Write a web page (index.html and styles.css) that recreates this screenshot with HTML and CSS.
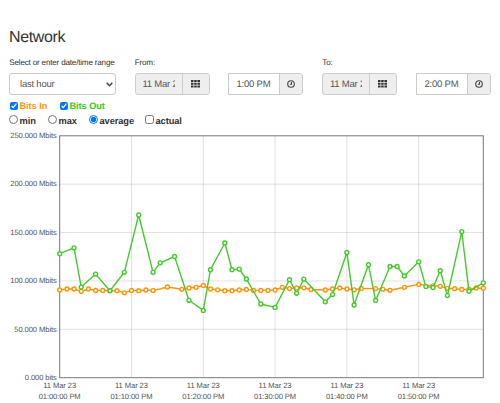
FILE: index.html
```html
<!DOCTYPE html>
<html lang="en">
<head>
<meta charset="utf-8">
<title>Network</title>
<link rel="stylesheet" href="styles.css">
</head>
<body>
<main class="page">
  <h1 class="title">Network</h1>
  <div class="filters">
    <div class="field field-range">
      <label class="label">Select or enter date/time range</label>
      <div class="control select"><span>last hour</span>
        <svg class="chevron" width="7" height="5" viewBox="0 0 7 5"><path d="M.7.8 3.5 3.7 6.3.8"/></svg>
      </div>
    </div>
    <div class="field field-from">
      <label class="label">From:</label>
      <div class="pair">
        <div class="control group date"><span class="value">11 Mar 2023</span><span class="addon"><svg width="9" height="8" viewBox="0 0 9 8"><path d="M0 0h2.5v2H0zM3.2 0h2.5v2H3.2zM6.4 0H9v2H6.4zM0 2.7h2.5v2H0zM3.2 2.7h2.5v2H3.2zM6.4 2.7H9v2H6.4zM0 5.4h2.5v2H0zM3.2 5.4h2.5v2H3.2zM6.4 5.4H9v2H6.4z"/></svg></span></div>
        <div class="control group time"><span class="value">1:00 PM</span><span class="addon"><svg class="clock" width="8" height="8" viewBox="0 0 8 8"><circle cx="4" cy="4" r="3.3"/><path d="M4.5 2v2.3H2.8"/></svg></span></div>
      </div>
    </div>
    <div class="field">
      <label class="label">To:</label>
      <div class="pair">
        <div class="control group date date-to"><span class="value">11 Mar 2023</span><span class="addon"><svg width="9" height="8" viewBox="0 0 9 8"><path d="M0 0h2.5v2H0zM3.2 0h2.5v2H3.2zM6.4 0H9v2H6.4zM0 2.7h2.5v2H0zM3.2 2.7h2.5v2H3.2zM6.4 2.7H9v2H6.4zM0 5.4h2.5v2H0zM3.2 5.4h2.5v2H3.2zM6.4 5.4H9v2H6.4z"/></svg></span></div>
        <div class="control group time time-to"><span class="value">2:00 PM</span><span class="addon"><svg class="clock" width="8" height="8" viewBox="0 0 8 8"><circle cx="4" cy="4" r="3.3"/><path d="M4.5 2v2.3H2.8"/></svg></span></div>
      </div>
    </div>
  </div>
  <div class="options series">
    <label class="option in"><input type="checkbox" checked>Bits In</label>
    <label class="option out"><input type="checkbox" checked>Bits Out</label>
  </div>
  <div class="options modes">
    <label class="option min"><input type="radio" name="mode">min</label>
    <label class="option max"><input type="radio" name="mode">max</label>
    <label class="option average"><input type="radio" name="mode" checked>average</label>
    <label class="option"><input type="checkbox">actual</label>
  </div>
  <svg class="chart" width="500" height="273" viewBox="0 130 500 273">
    <g id="grid" class="grid"></g>
    <rect class="frame" x="59.7" y="135.8" width="423.6" height="241.9"/>
    <g id="labels"></g>
    <g id="plot"></g>
  </svg>
</main>
<script src="chart.js"></script>
</body>
</html>
```
FILE: styles.css
```css
* { box-sizing: border-box; }
html, body { margin: 0; }
body {
  width: 500px;
  height: 403px;
  overflow: hidden;
  background: #fff;
  color: #333;
  font-family: "Liberation Sans", Arial, sans-serif;
  text-rendering: geometricPrecision;
}
.title {
  margin: 0;
  padding: 27px 0 0 9px;
  height: 57px;
  font-size: 16px;
  letter-spacing: -.35px;
  line-height: 21px;
  font-weight: 400;
}
.filters {
  display: flex;
  height: 43px;
  padding-left: 9px;
}
.field-range { width: 125.5px; }
.field-from { width: 187.5px; }
.label {
  display: block;
  height: 16px;
  padding-left: .3px;
  font-size: 8.1px;
  letter-spacing: -.19px;
  line-height: 11px;
  white-space: nowrap;
}
.control {
  display: flex;
  height: 22px;
  border: 1px solid #ccc;
  border-radius: 3px;
  background: #fff;
  color: #555;
  font-size: 9.5px;
  letter-spacing: -.22px;
  line-height: 21px;
  white-space: nowrap;
}
.select {
  width: 107px;
  padding: 0 2px 0 10px;
  align-items: center;
  justify-content: space-between;
}
.chevron {
  fill: none;
  stroke: #444;
  stroke-width: 1.5;
}
.pair {
  display: flex;
  gap: 18.5px;
}
.date { width: 75px; background: #eee; }
.value {
  flex: none;
  width: 47px;
  padding-left: 7.5px;
}
.date .value {
  width: 32.3px;
  margin-left: 7px;
  padding-left: 0;
  overflow: hidden;
}
.date .addon { margin-left: 7px; }
.date-to .value { width: 31.5px; }
.time { width: 75px; border-radius: 0 3px 3px 0; }
.time .value { width: 50px; }
.time-to .value { width: 50.5px; padding-left: 8px; }
.addon {
  display: flex;
  flex: 1;
  align-items: center;
  justify-content: center;
  border-left: 1px solid #ccc;
  background: #eee;
  border-radius: 0 2px 2px 0;
  fill: #333;
}
.date .addon svg { margin-top: -1px; }
.clock {
  fill: none;
  stroke: #444;
  stroke-width: 1.1;
}
.options {
  display: flex;
  padding-left: 9px;
  font-size: 9.3px;
  letter-spacing: -.1px;
  font-weight: 700;
}
.series { height: 14px; }
.modes { height: 16px; }
.option {
  display: flex;
  height: 13px;
  line-height: 13px;
}
.option input {
  width: 9px;
  height: 9px;
  margin: 2px 1.5px 0 0;
}
.series input {
  width: 8px;
  height: 8px;
  margin-left: 1px;
}
.modes input { margin-top: 1px; }
.modes .option { line-height: 14px; }
.in { width: 50px; color: #ff9408; }
.out { color: #3c2; }
.min { width: 39px; }
.max { width: 41px; }
.average { width: 56px; }
.chart { display: block; }
.grid { stroke: #000; stroke-opacity: .15; stroke-width: .8; }
.frame { fill: none; stroke: #777; stroke-width: 1; }
.axis { font-size: 7.6px; fill: #545454; }
.line { fill: none; stroke-width: 1.4; stroke-linejoin: round; }
.dot { fill: #fff; stroke-width: 1.4; }
.orange { stroke: #ff9408; }
.green { stroke: #43cb2b; }
```
FILE: chart.js
```js
const NS = "http://www.w3.org/2000/svg";
const left = 59.7, step = 7.18;

function add(parent, name, attrs, text) {
  const el = document.createElementNS(NS, name);
  for (const key in attrs) el.setAttribute(key, attrs[key]);
  if (text) el.textContent = text;
  parent.appendChild(el);
}

const grid = document.getElementById("grid");
const labels = document.getElementById("labels");
const plot = document.getElementById("plot");

["250.000 Mbits", "200.000 Mbits", "150.000 Mbits", "100.000 Mbits", "50.000 Mbits", "0.000 bits"].forEach((text, i) => {
  const y = 135.8 + i * 48.38;
  if (i > 0 && i < 5) add(grid, "line", { x1: left, x2: 483.3, y1: y, y2: y });
  add(labels, "text", { class: "axis", x: 56.8, y: y + 2.3, "text-anchor": "end",
    textLength: [46.5, 46.5, 46.5, 46.5, 42.5, 32][i] }, text);
});

for (let i = 0; i < 6; i++) {
  const x = left + i * 71.8;
  if (i) add(grid, "line", { x1: x, x2: x, y1: 135.8, y2: 377.7 });
  add(labels, "text", { class: "axis", x: x, y: 388.3, "text-anchor": "middle", textLength: 33 }, "11 Mar 23");
  add(labels, "text", { class: "axis", x: x, y: 399, "text-anchor": "middle", textLength: 42 }, `01:${i}0:00 PM`);
}

const bitsIn = [[0,290],[1,289],[2,289],[3,291.3],[4,289],[5,290.5],[6,290.5],[7,290.7],[8,290.7],[9,292.8],[10,290.4],[11,290.7],[12,290],[13,290.6],[15,287],[17,289.3],[18,288],[19,287.3],[20,285.5],[21,289],[22,289.8],[23,290.7],[24,290.7],[25,290],[26,289.4],[27,290.4],[28,290.4],[29,290.4],[30,290],[31,287.3],[32,288.6],[33,288],[34,287.8],[35,289.5],[37,290],[38,289],[39,288],[40,289],[41,289.8],[42,288.5],[44,288.6],[45,289.3],[46,290.3],[48,287.3],[50,284.4],[52,285.8],[53,286.3],[54,288.3],[55,288.7],[56,289.4],[57,289.5],[58,288],[59,288.2]];
const bitsOut = [[0,253.7],[2,247.8],[3,287.1],[5,274.1],[7,290.7],[9,272.3],[11,215],[13,272.3],[14,262.8],[16,256.5],[18,300.3],[20,310.4],[21,269.7],[23,243],[24,269.7],[25,269.1],[26,279],[28,304],[30,307.4],[32,279.7],[33,293.3],[34,279.1],[37,301.8],[38,294.6],[40,252.4],[41,305],[43,264.7],[44,300.4],[46,266.5],[47,266.5],[48,276],[50,261.8],[51,286.6],[52,287.5],[53,270.7],[54,295.6],[56,231.6],[57,291.3],[59,282.8]];

[[bitsIn, "orange"], [bitsOut, "green"]].forEach(([data, color]) => {
  const points = data.map(([i, y]) => [left + i * step, y]);
  add(plot, "polyline", { class: "line " + color, points: points.join(" ") });
  points.forEach(([cx, cy]) => add(plot, "circle", { class: "dot " + color, cx, cy, r: 1.95 }));
});
```
